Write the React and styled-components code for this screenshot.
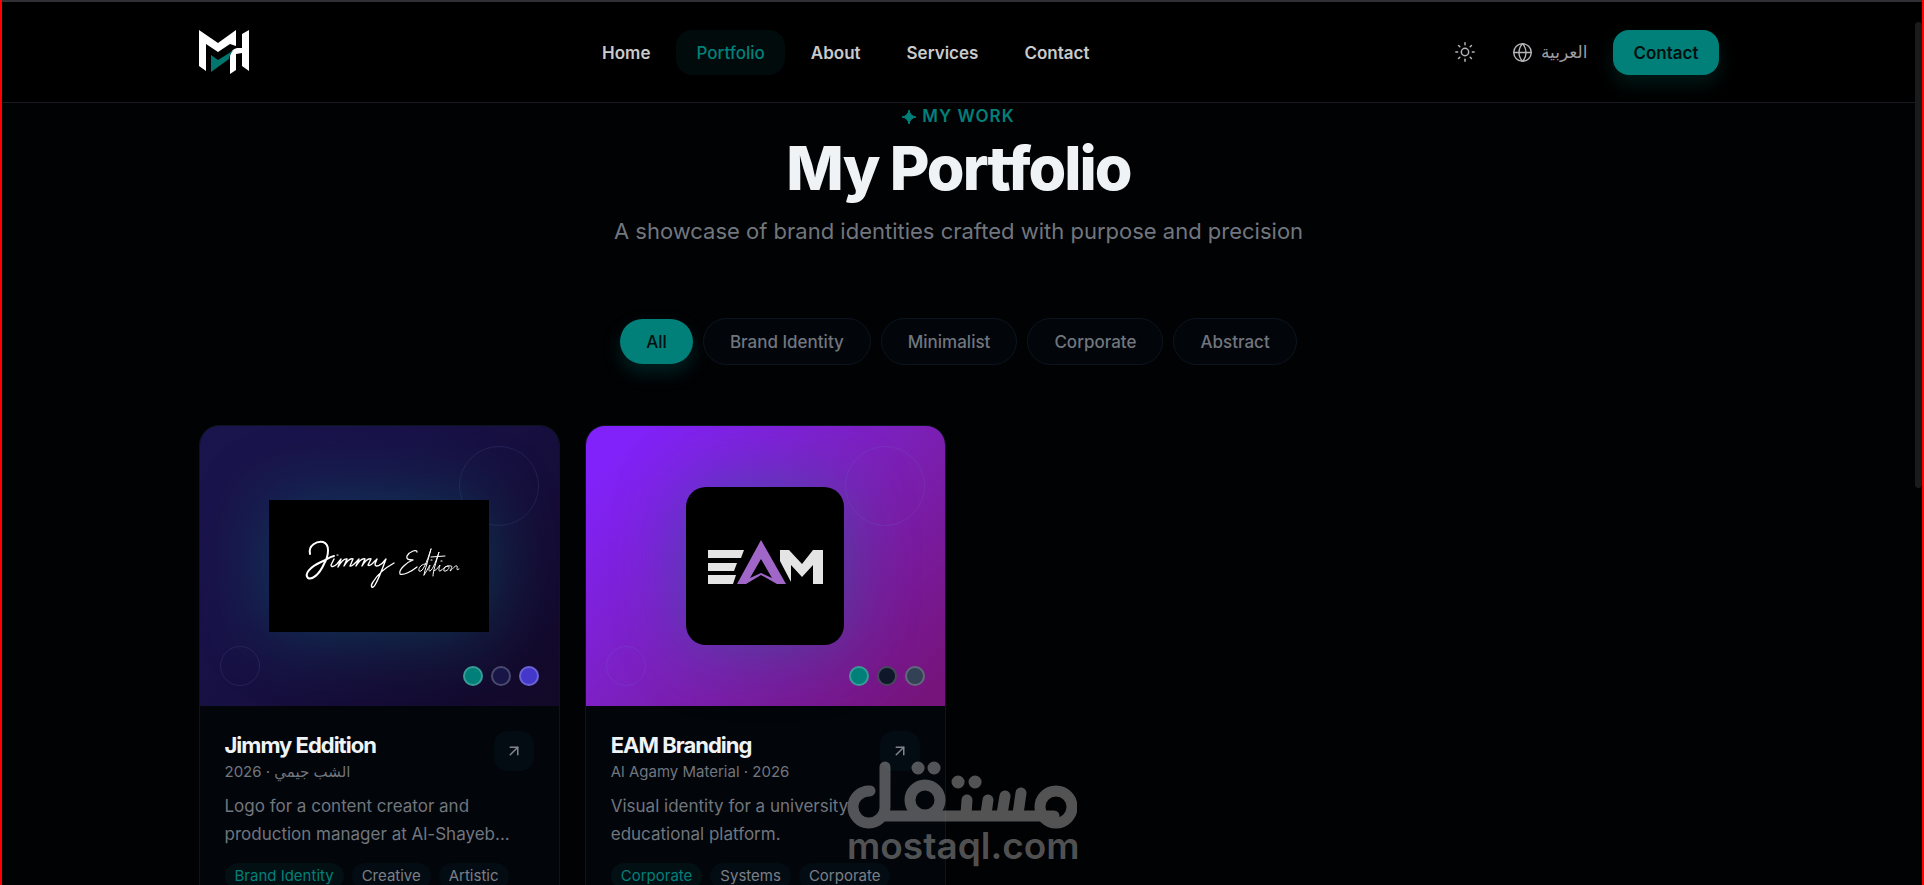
import React from 'react'
import styled, { createGlobalStyle, css } from 'styled-components'
import { ArrowUpRight, Globe, Sun } from 'lucide-react'

const GlobalStyle = createGlobalStyle`
    *, *::before, *::after{
        box-sizing: border-box;
    }
    :root{
        --bg: #010204;
        --surface: #02050a;
        --surface-2: #040c13;
        --line: #0c151f;
        --text: #f0f3f6;
        --muted: #71767e;
        --accent: #01807a;
    }
    body{
        margin: 0;
        background: var(--bg);
        color: var(--text);
        font-family: Inter, "Noto Sans", "DejaVu Sans", sans-serif;
    }
    h1, h2, p{
        margin: 0;
    }
    a{
        color: inherit;
        text-decoration: none;
    }
    button{
        font: inherit;
        border: 0;
        padding: 0;
        cursor: pointer;
    }
`

const Frame = styled.div`
    position: relative;
    height: 100vh;
    overflow: hidden;
    border: solid red;
    border-width: 0 2px;
    padding-right: 7px;
`

const Container = styled.div`
    width: 100%;
    max-width: 1520px;
    margin: 0 auto;
`

const Header = styled.header`
    height: 103px;
    margin-right: -7px;
    padding-right: 7px;
    display: flex;
    align-items: center;
    background: #000;
    border-top: 2px solid #303036;
    border-bottom: 1px solid #1a1b1e;
`

const Bar = styled(Container)`
    display: flex;
    justify-content: space-between;
    align-items: center;
`

const LogoLink = styled.a`
    svg{
        display: block;
        width: 50px;
        height: 44px;
    }
`

const Nav = styled.nav`
    display: flex;
    gap: 6px;
`

const NavLink = styled.a`
    height: 45px;
    padding: 2px 20px 0;
    display: flex;
    align-items: center;
    border-radius: 16px;
    font-size: 17px;
    font-weight: 600;
    color: #c9cacb;
    ${props => props.$active && css`
        font-weight: 500;
        color: var(--accent);
        background: #010b0c;
    `}
`

const HeaderActions = styled.div`
    display: flex;
    align-items: center;
    gap: 9px;
`

const ThemeBtn = styled.button`
    height: 44px;
    padding: 0 11px;
    display: flex;
    align-items: center;
    background: none;
    color: #b4b5b8;
`

const LangBtn = styled(ThemeBtn)`
    gap: 8px;
    padding: 0 17px 0 16px;
    font-size: 17px;
    font-weight: 500;
    span{
        color: #9b9da2;
    }
`

const ContactLink = styled.a`
    height: 45px;
    padding: 2px 20px 0;
    display: flex;
    align-items: center;
    border-radius: 16px;
    background: var(--accent);
    color: #01100f;
    font-size: 17px;
    font-weight: 600;
    box-shadow: 0 9px 18px rgba(1, 128, 122, 0.2);
`

const Hero = styled.section`
    display: flex;
    flex-direction: column;
    align-items: center;
    padding-top: 1px;
    text-align: center;
`

const Eyebrow = styled.p`
    font-size: 17px;
    line-height: 25px;
    font-weight: 600;
    letter-spacing: 1px;
    text-transform: uppercase;
    color: var(--accent);
    display: flex;
    align-items: center;
    gap: 6px;
    svg{
        width: 14px;
        height: 14px;
    }
`

const Title = styled.h1`
    margin-top: 6px;
    font-size: 61px;
    line-height: 67px;
    font-weight: 800;
    letter-spacing: -2px;
`

const Subtitle = styled.p`
    margin-top: 12px;
    font-size: 22px;
    line-height: 34px;
    color: var(--muted);
`

const Filters = styled.div`
    display: flex;
    justify-content: center;
    align-items: center;
    gap: 10px;
    margin-top: 70px;
`

const FilterBtn = styled.button`
    height: 47px;
    padding: 0 26px;
    border: 1px solid var(--line);
    border-radius: 24px;
    background: var(--surface);
    color: var(--muted);
    font-size: 17px;
    font-weight: 500;
    ${props => props.$active && css`
        height: 45px;
        border: 0;
        background: var(--accent);
        color: #01100f;
        box-shadow: 0 9px 18px rgba(1, 128, 122, 0.25);
    `}
`

const Grid = styled(Container)`
    margin-top: 60px;
    display: grid;
    grid-template-columns: repeat(4, 1fr);
    gap: 25px;
`

const Card = styled.article`
    overflow: hidden;
    border: 1px solid var(--line);
    border-radius: 20px;
    background: var(--surface);
`

const Cover = styled.div`
    position: relative;
    height: 280px;
    display: flex;
    align-items: center;
    justify-content: center;
    background: ${props => props.$bg};
`

const Ring = styled.span`
    position: absolute;
    border: 1px solid rgba(110, 140, 220, 0.14);
    border-radius: 50%;
    ${props => props.$small ? css`
        left: 20px;
        bottom: 20px;
        width: 40px;
        height: 40px;
    ` : css`
        right: 20px;
        top: 20px;
        width: 80px;
        height: 80px;
    `}
`

const Artwork = styled.div`
    position: relative;
    width: ${props => props.$square ? '158px' : '220px'};
    height: ${props => props.$square ? '158px' : '132px'};
    border-radius: ${props => props.$square ? '20px' : '0'};
    background: #000;
    box-shadow: 0 0 70px rgba(1, 128, 122, 0.38);
    svg{
        display: block;
        width: 100%;
        height: 100%;
    }
`

const Swatches = styled.div`
    position: absolute;
    right: 20px;
    bottom: 20px;
    display: flex;
    gap: 8px;
`

const Swatch = styled.span`
    width: 20px;
    height: 20px;
    border-radius: 50%;
    border: 2px solid rgba(255, 255, 255, 0.22);
    background: ${props => props.$color};
`

const Body = styled.div`
    padding: 25px;
`

const CardHead = styled.div`
    display: flex;
    justify-content: space-between;
    align-items: flex-start;
`

const CardTitle = styled.h2`
    font-size: 22px;
    line-height: 29px;
    font-weight: 700;
    letter-spacing: -1px;
`

const Meta = styled.p`
    font-size: 15px;
    line-height: 24px;
    color: var(--muted);
`

const OpenBtn = styled.button`
    width: 40px;
    height: 40px;
    display: flex;
    align-items: center;
    justify-content: center;
    border-radius: 14px;
    background: var(--surface-2);
    color: #82868c;
`

const Description = styled.p`
    margin-top: 8px;
    font-size: 17px;
    line-height: 28px;
    color: var(--muted);
`

const Tags = styled.div`
    display: flex;
    gap: 8px;
    margin-top: 15px;
`

const Tag = styled.span`
    padding: 0 10px;
    border-radius: 13px;
    background: ${props => props.$main ? '#020f13' : 'var(--surface-2)'};
    color: ${props => props.$main ? 'var(--accent)' : '#7b7f86'};
    font-size: 15px;
    line-height: 26px;
`

const ScrollThumb = styled.div`
    position: absolute;
    top: 22px;
    right: 0;
    width: 7px;
    height: 466px;
    border-radius: 4px;
    background: #191b1c;
`

const Watermark = styled.div`
    position: absolute;
    left: 845px;
    top: 761px;
    width: 230px;
    color: rgba(150, 150, 150, 0.55);
    pointer-events: none;
    svg{
        display: block;
        width: 230px;
        height: 68px;
        opacity: 0.55;
    }
    span{
        display: block;
        font-size: 37px;
        line-height: 34px;
        font-weight: 600;
        white-space: nowrap;
    }
`

const BrandLogo = () => (
    <svg viewBox="0 0 50 44" role="img" aria-label="MH">
        <path fill="#fff" d="M0 0 L19 13 L37 0 V16 L31 14 L19 22 L7 14 V41 L0 36 Z" />
        <path fill="#fff" d="M43 4 L50 0 V41 L43 36 V23 L37 24 V40 L31 44 V26 Q32 19 38 18 H43 Z" />
        <path fill="#01766f" d="M12 25 L19 30 L35 20 Q31 23 30 29 L12 42 Z" />
    </svg>
)

const Sparkle = () => (
    <svg viewBox="0 0 14 14" fill="currentColor" aria-hidden="true">
        <path d="M7 0 Q8 6 14 7 Q8 8 7 14 Q6 8 0 7 Q6 6 7 0 Z" stroke="currentColor" strokeLinejoin="round" />
    </svg>
)

const JimmyLogo = () => (
    <svg viewBox="0 0 220 132" fill="none" stroke="#fff" strokeLinecap="round" strokeLinejoin="round" role="img" aria-label="Jimmy Edition">
        <path strokeWidth="2" d="M41 54 C39 45 48 41 54 42 C61 44 60 55 55 64 C50 75 43 80 39 78 C35 74 41 67 52 62 C57 60 60 57 65 56" />
        <path strokeWidth="1.4" d="M65 59 L62 65 C62 68 66 66 68 64 L72 59 L69 67 C72 62 75 58 78 59 L75 66 C78 61 81 58 84 59 L81 66 C83 67 87 62 90 59 L87 66 C90 61 93 58 96 59 L93 66 C96 61 99 58 102 59 L99 65 C101 67 105 62 108 59 L106 64 C106 68 112 66 117 59 C113 70 109 80 106 85 C103 90 101 86 104 82 C108 75 116 68 125 63" />
        <path strokeWidth="1.3" d="M148 52 C148 49 141 51 138 56 C137 59 139 60 144 60 C138 62 129 70 131 74 C134 76 143 71 148 67" />
        <path strokeWidth="1" d="M158 64 C153 63 149 68 150 71 C153 73 157 65 162 49 M162 49 C159 61 156 69 155 75 M155 75 C158 71 160 66 161 65 C160 69 159 71 161 71 C164 70 168 58 170 52 C167 63 164 71 164 76 M162 57 L176 56 M165 71 C168 70 170 66 171 65 C170 69 169 71 171 71 C174 70 175 66 179 66 C182 67 178 72 175 71 C174 68 178 65 182 66 C184 66 182 69 181 71 C184 69 186 65 188 66 C189 68 186 71 190 69" />
        <path strokeWidth="1.2" d="M68 55 L69 55 M162 60 L163 60 M172 61 L173 61" />
    </svg>
)

const EamLogo = () => (
    <svg viewBox="0 0 158 158" role="img" aria-label="EAM">
        <g fill="#e4e4e4">
            <path d="M22 63 H58 L55 71 H22 Z M22 76 H51 L48 84 H22 Z M22 88 H50 L47 97 H22 Z" />
            <path d="M94 63 H103 L116 77 L127 63 H137 V97 H127 V78 L116 90 L105 78 V95 L94 74 Z" />
        </g>
        <path fill="#a066c8" d="M75 53 L100 97 H91 L75 88 L60 97 H51 Z" />
        <path fill="#000" d="M75 72 L86 91 L75 86 L64 91 Z" />
    </svg>
)

const MostaqlMark = () => (
    <svg viewBox="0 0 230 68" fill="none" stroke="#969696" strokeWidth="11" strokeLinecap="round" role="img" aria-label="مستقل">
        <path d="M23 30 A16 16 0 1 0 38 46 V6 M36 55 H207" />
        <circle cx="78" cy="39" r="15" />
        <circle cx="209" cy="46" r="16" />
        <path d="M119 53 L120 39 M139 53 L141 39 M155 53 L158 35 M171 53 L174 32" />
        <path strokeWidth="13" d="M71 7 H71.1 M87 7 H87.1 M111 21 H111.1 M128 21 H128.1" />
    </svg>
)

const projects = [
    {
        title: 'Jimmy Eddition',
        meta: '2026 · الشب جيمي',
        description: ['Logo for a content creator and', 'production manager at Al-Shayeb...'],
        tags: ['Brand Identity', 'Creative', 'Artistic'],
        colors: ['#01807a', '#171646', '#4338ca'],
        cover: 'linear-gradient(135deg, #1a154d 0%, #181248 35%, #120827 100%)',
        logo: <JimmyLogo />,
    },
    {
        title: 'EAM Branding',
        meta: 'Al Agamy Material · 2026',
        description: ['Visual identity for a university', 'educational platform.'],
        tags: ['Corporate', 'Systems', 'Corporate'],
        colors: ['#01807a', '#0f172a', '#334155'],
        cover: 'linear-gradient(135deg, #8122fb 8%, #7b20b8 52%, #76147c 95%)',
        logo: <EamLogo />,
        square: true,
    },
]

const links = ['Home', 'Portfolio', 'About', 'Services', 'Contact']
const filters = ['All', 'Brand Identity', 'Minimalist', 'Corporate', 'Abstract']

function ProjectCard({ project }) {
    return (
        <Card>
            <Cover $bg={project.cover}>
                <Ring />
                <Ring $small />
                <Artwork $square={project.square}>{project.logo}</Artwork>
                <Swatches>
                    {project.colors.map(color => <Swatch key={color} $color={color} />)}
                </Swatches>
            </Cover>
            <Body>
                <CardHead>
                    <div>
                        <CardTitle>{project.title}</CardTitle>
                        <Meta>{project.meta}</Meta>
                    </div>
                    <OpenBtn aria-label={`Open ${project.title}`}>
                        <ArrowUpRight size={18} strokeWidth={2} />
                    </OpenBtn>
                </CardHead>
                <Description>
                    {project.description[0]}<br />{project.description[1]}
                </Description>
                <Tags>
                    {project.tags.map((tag, i) => <Tag key={i} $main={i === 0}>{tag}</Tag>)}
                </Tags>
            </Body>
        </Card>
    )
}

export default function App() {
    const [filter, setFilter] = React.useState('All')

    return (
        <Frame>
            <GlobalStyle />
            <Header>
                <Bar>
                    <LogoLink href="#home"><BrandLogo /></LogoLink>
                    <Nav>
                        {links.map(link => (
                            <NavLink key={link} href={`#${link.toLowerCase()}`} $active={link === 'Portfolio'}>{link}</NavLink>
                        ))}
                    </Nav>
                    <HeaderActions>
                        <ThemeBtn aria-label="Toggle theme"><Sun size={22} strokeWidth={1.6} /></ThemeBtn>
                        <LangBtn>
                            <Globe size={21} strokeWidth={1.6} />
                            <span lang="ar">العربية</span>
                        </LangBtn>
                        <ContactLink href="#contact">Contact</ContactLink>
                    </HeaderActions>
                </Bar>
            </Header>
            <main>
                <Hero>
                    <Eyebrow><Sparkle />My Work</Eyebrow>
                    <Title>My Portfolio</Title>
                    <Subtitle>A showcase of brand identities crafted with purpose and precision</Subtitle>
                </Hero>
                <Filters>
                    {filters.map(name => (
                        <FilterBtn key={name} $active={name === filter} onClick={() => setFilter(name)}>{name}</FilterBtn>
                    ))}
                </Filters>
                <Grid>
                    {projects.map(project => <ProjectCard key={project.title} project={project} />)}
                </Grid>
            </main>
            <ScrollThumb />
            <Watermark>
                <MostaqlMark />
                <span>mostaql.com</span>
            </Watermark>
        </Frame>
    )
}
